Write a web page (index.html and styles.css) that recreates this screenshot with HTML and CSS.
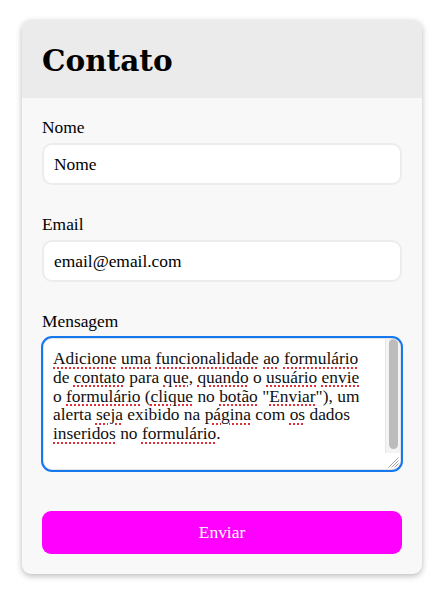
FILE: index.html
```html
<!DOCTYPE html>
<html lang="pt-BR">
<head>
<meta charset="utf-8">
<title>Contato</title>
<link rel="stylesheet" href="styles.css">
</head>
<body>
<div class="page">
  <form class="card">
    <div class="card-header">
      <h1 class="title">Contato</h1>
    </div>
    <div class="card-body">
      <div class="field">
        <label class="label">Nome</label>
        <div class="input">Nome</div>
      </div>
      <div class="field">
        <label class="label">Email</label>
        <div class="input">email@email.com</div>
      </div>
      <div class="field field-last">
        <label class="label">Mensagem</label>
        <div class="textarea" role="textbox">
          <div class="textarea-content"><span class="sp">Adicione</span> <span class="sp">uma</span> <span class="sp">funcionalidade</span> <span class="sp">ao</span> <span class="sp">formulário</span><br>de <span class="sp">contato</span> para <span class="sp">que</span>, <span class="sp">quando</span> o <span class="sp">usuário</span> <span class="sp">envie</span><br>o <span class="sp">formulário</span> (<span class="sp">clique</span> no <span class="sp">botão</span> "<span class="sp">Enviar</span>"), um<br>alerta <span class="sp">seja</span> exibido na <span class="sp">página</span> com <span class="sp">os</span> dados<br><span class="sp">inseridos</span> no <span class="sp">formulário</span>.</div>
          <div class="scrollbar">
            <div class="scroll-track"><div class="scroll-thumb"></div></div>
            <div class="scroll-corner">
              <svg class="resizer" width="12" height="12" viewBox="0 0 12 12" aria-hidden="true">
                <path d="M11.5 1.5 L1.5 11.5 M11.5 4.5 L4.5 11.5 M11.5 7.5 L7.5 11.5 M11.5 10.5 L10.5 11.5" stroke="#9a9a9a" stroke-width="0.9" fill="none"/>
              </svg>
            </div>
          </div>
        </div>
      </div>
      <button type="button" class="button">Enviar</button>
    </div>
  </form>
</div>
</body>
</html>
```

FILE: styles.css
```css
* { box-sizing: border-box; }
html, body { margin: 0; padding: 0; background: #ffffff; }
body { font-family: "Liberation Serif", "Times New Roman", serif; color: #111; }

.page { padding: 20px 17px 20px 22px; }

.card {
  width: 400px;
  background: #f8f8f8;
  border-radius: 9px;
  box-shadow: 0 2px 6px rgba(0, 0, 0, 0.28);
  overflow: hidden;
}

.card-header {
  background: #ebebeb;
  height: 78px;
  padding: 24px 20px 0 20px;
}

.title {
  margin: 0;
  font-family: "DejaVu Serif", Georgia, serif;
  font-size: 29.5px;
  line-height: 34px;
  font-weight: bold;
  color: #000;
}

.card-body { padding: 20px; }

.field { display: flex; flex-direction: column; margin-bottom: 30px; }
.field-last { margin-bottom: 40px; }

.label {
  font-size: 17.4px;
  line-height: 19px;
  height: 19px;
  margin-bottom: 6px;
  color: #000;
}

.input {
  height: 42px;
  background: #fff;
  border: 2px solid #ececec;
  border-radius: 10px;
  padding: 0 10px;
  display: flex;
  align-items: center;
  font-size: 17.4px;
  color: #000;
}

.textarea {
  height: 134px;
  display: flex;
  background: #fff;
  border: 2px solid #e4e4e4;
  border-radius: 10px;
  outline: 2px solid #1677ee;
  outline-offset: -1px;
  overflow: hidden;
  font-size: 17.4px;
  line-height: 18.8px;
  color: #111;
}

.textarea-content {
  flex: 1;
  padding: 10px 9px;
  white-space: nowrap;
}

.sp {
  text-decoration: underline dotted #e0303a;
  text-decoration-thickness: 1.5px;
  text-underline-offset: 3px;
}

.scrollbar {
  width: 15px;
  display: flex;
  flex-direction: column;
}

.scroll-track {
  flex: 1;
  background: #f4f4f4;
  border-left: 1px solid #e6e6e6;
  padding: 0 2px 4px 2.5px;
}

.scroll-thumb {
  height: 110px;
  background: #bcbcbc;
  border-radius: 5px;
}

.scroll-corner {
  height: 16px;
  display: flex;
  align-items: flex-end;
  justify-content: flex-end;
  padding: 0 1px 1px 0;
}

.resizer { display: block; }

.button {
  display: block;
  width: 100%;
  height: 43px;
  border: none;
  border-radius: 9px;
  background: #ff00ff;
  color: #fff;
  font-family: inherit;
  font-size: 17.4px;
  padding: 0;
  cursor: pointer;
}
```
